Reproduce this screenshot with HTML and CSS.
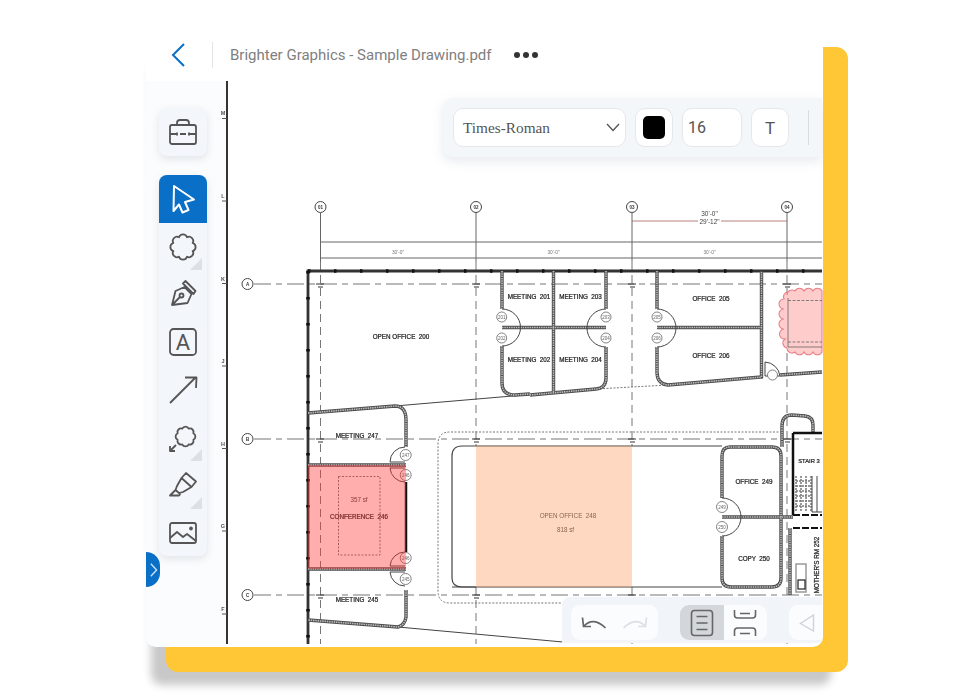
FILE: index.html
```html
<!DOCTYPE html>
<html lang="en">
<head>
<meta charset="utf-8">
<title>Brighter Graphics - Sample Drawing.pdf</title>
<link rel="stylesheet" href="styles.css">
</head>
<body>
<div class="stage">
  <div class="backing"></div>
  <main class="window">
    <header class="header">
      <svg class="back" viewBox="0 0 16 26"><path d="M14 2 3 13l11 11"/></svg>
      <span class="header-sep"></span>
      <span class="title">Brighter Graphics - Sample Drawing.pdf</span>
      <span class="dots"><i></i><i></i><i></i></span>
    </header>
    <section class="canvas">
      <svg class="drawing" viewBox="146 81 677 565">
        <defs>
          <g id="walls">
            <path d="M502 271V309M502 346V383Q502 395 515 395L530 394"/>
            <path d="M553.5 271V392"/>
            <path d="M606 271V309M606 347V378Q606 388 596 389L530 395"/>
            <path d="M502 327.5H606"/>
            <path d="M657 271V309M657 347V372Q657 384 668 385L761.500 377V271"/>
            <path d="M657 327.500H761.500"/>
            <path d="M780 375L822 372"/>
            <path d="M308 413L395 406Q406 406 406 420V447"/>
            <path d="M308 465H406M308 569H406"/>
            <path d="M406 590V617Q405 625 398 627L308 620"/>
            <path d="M739 447H730Q722 447 722 456V498M722 536V578Q722 587 731 587H772Q781 587 781 578V456Q781 447 772 447H739"/>
            <path d="M722 517H793"/>
            <path d="M782 447V426Q782 415 792 415L805 416Q813 417 813 425V433"/>
            <path d="M790 528V595"/>
          </g>
        </defs>

        <rect class="margin" x="146" y="81" width="80" height="565"/>

        <path class="sheet-edge" d="M227 81V644"/>
        <g class="sheet-ticks">
          <path d="M222 118.500H227M222 201H227M222 283.500H227M222 366H227M222 448.500H227M222 531H227M222 614H227"/>
        </g>
        <g class="tick-labels">
          <text x="223" y="115">M</text><text x="223" y="198">L</text><text x="223" y="280.500">K</text>
          <text x="223" y="363">J</text><text x="223" y="445.500">H</text><text x="223" y="528">G</text><text x="223" y="611">F</text>
        </g>

        <path class="grid-solid" d="M320.500 213V262M476 213V262M632 213V262M787 213V262"/>
        <path class="grid-v" d="M320.500 262V644M476 262V446M476 587V644M632 262V446M632 587V644M787 262V644"/>
        <path class="grid-h" d="M254 284H822M254 439H822M254 595H822"/>
        <path class="dim" d="M320 242H822M320 258H822"/>
        <path class="dim-red" d="M632 221H698M721 221H787"/>
        <path class="marks" d="M316 284h8M318 287h5M472 284h8M474 287h5M628 284h8M630 287h5M783 284h8M785 287h5M316 439h8M318 442h5M472 439h8M474 442h5M628 439h8M630 442h5M783 439h8M785 442h5M316 595h8M318 598h5M472 595h8M474 598h5M628 595h8M630 598h5"/>

        <g class="bubble">
          <circle cx="320.500" cy="207" r="5.500"/><circle cx="476" cy="207" r="5.500"/><circle cx="632" cy="207" r="5.500"/><circle cx="787" cy="207" r="5.500"/>
          <circle cx="247.500" cy="284" r="5.500"/><circle cx="247.500" cy="439" r="5.500"/><circle cx="247.500" cy="595" r="5.500"/>
        </g>
        <g class="bubble-text">
          <text x="320.500" y="208.700">01</text><text x="476" y="208.700">02</text><text x="632" y="208.700">03</text><text x="787" y="208.700">04</text>
          <text x="247.500" y="286">A</text><text x="247.500" y="441">B</text><text x="247.500" y="597">C</text>
        </g>
        <g class="dim-text">
          <text x="398" y="254">30'-0"</text><text x="553.500" y="254">30'-0"</text><text x="709.500" y="254">30'-0"</text>
        </g>
        <g class="dim-text-big">
          <text x="709.500" y="215.500">30'-0"</text><text x="709.500" y="223.500">29'-12"</text>
        </g>

        <path class="outer-wall" d="M822 271H308V644"/>
        <path class="outer-dots" d="M308 271H822M308 271V644"/>

        <path class="thin" d="M395 406L530 394.500"/>
        <path class="dashed-thin" d="M596 389L668 385"/>
        <path class="thin" d="M398 627L563 642"/>
        <path class="thin" d="M452 587H722M476 446H722"/>
        <path class="open-office" d="M476 446H462Q452 446 452 456V578Q452 587 462 587H476"/>
        <path class="dotted" d="M782 432H450Q438 432 438 444V591Q438 603 450 603H562"/>

        <use href="#walls" class="wall-outer"/>
        <use href="#walls" class="wall-inner"/>
        <path class="thick" d="M406 482V552"/>

        <path class="thin" d="M502 309A18.500 18.500 0 0 1 502 346M606 309A18.500 18.500 0 0 0 606 347M657 309A18.500 18.500 0 0 1 657 347"/>
        <path class="thin" d="M722 498A19 19 0 0 1 722 536"/>
        <path class="thin" d="M765 362A16 16 0 0 1 780 376H765Z"/>
        <path class="thin" d="M390 462A15 15 0 0 1 405 447M390 468A15 15 0 0 0 405 482M390 566A15 15 0 0 1 405 552M390 572A15 15 0 0 0 405 586M390 462H405M390 468H405M390 566H405M390 572H405"/>

        <g class="tags">
          <circle cx="501.700" cy="317" r="5"/><circle cx="501.700" cy="338" r="5"/><circle cx="606" cy="317" r="5"/><circle cx="606" cy="338" r="5"/>
          <circle cx="657" cy="317" r="5"/><circle cx="657" cy="338" r="5"/><circle cx="772.500" cy="375" r="5"/>
          <circle cx="405.700" cy="455" r="5.500"/><circle cx="405.700" cy="475" r="5.500"/><circle cx="405.700" cy="558" r="5.500"/><circle cx="405.700" cy="579" r="5.500"/>
          <circle cx="722" cy="507" r="5.500"/><circle cx="722" cy="527" r="5.500"/>
        </g>
        <g class="tag-text">
          <text x="501.700" y="318.700">201</text><text x="501.700" y="339.700">202</text><text x="606" y="318.700">203</text><text x="606" y="339.700">204</text>
          <text x="657" y="318.700">205</text><text x="657" y="339.700">206</text>
          <text x="405.700" y="456.700">247</text><text x="405.700" y="476.700">246</text><text x="405.700" y="559.700">246</text><text x="405.700" y="580.700">245</text>
          <text x="722" y="508.700">249</text><text x="722" y="528.700">250</text>
        </g>

        <rect class="inner-dash" x="338.500" y="476.500" width="41.500" height="78.500"/>
        <path class="thick" d="M793 433V515M793 433H822"/>
        <path class="thick-dash" d="M793 528H822M793 515H822"/>
        <path class="stairs" d="M796 476V512M801 476V512M806 476V512M811 476V512M796 481H811M796 486H811M796 491H811M796 496H811M796 501H811M796 506H811"/>
        <path class="thin" d="M812 476V512H822M817 476V512"/>
        <rect class="closet" x="796" y="564" width="10" height="28"/>
        <rect class="closet-dark" x="798" y="580" width="7" height="9"/>

        <g class="labels">
          <text x="401" y="338.500">OPEN OFFICE  200</text>
          <text x="529" y="299">MEETING  201</text><text x="580.500" y="299">MEETING  203</text>
          <text x="529" y="361.500">MEETING  202</text><text x="580.500" y="361.500">MEETING  204</text>
          <text x="711" y="300.500">OFFICE  205</text><text x="711" y="357.500">OFFICE  206</text>
          <text x="357" y="437.500">MEETING  247</text><text x="357" y="602">MEETING  245</text>
          <text x="359" y="519">CONFERENCE  246</text>
          <text class="light" x="359" y="502">357 sf</text>
          <text class="light" x="568" y="517.500">OPEN OFFICE  248</text><text class="light" x="565.500" y="532">818 sf</text>
          <text x="754" y="483.500">OFFICE  249</text><text x="754" y="561">COPY  250</text>
          <text class="small" x="809" y="462.500">STAIR 3</text>
          <text class="rotated" x="-565" y="818.500">MOTHER'S RM 252</text>
        </g>

        <path class="cloud" d="M787 295a5 5 0 0 1 8 -4a5 5 0 0 1 9 0a5 5 0 0 1 9 0a5 5 0 0 1 9 0V352a5 5 0 0 1 -9 0a5 5 0 0 1 -9 0a5 5 0 0 1 -9 0a5 5 0 0 1 -8 -4a5 5 0 0 1 -2 -9a5 5 0 0 1 -1 -10a5 5 0 0 1 0 -10a5 5 0 0 1 0 -10a5 5 0 0 1 0 -10a5 5 0 0 1 3 -7z"/>
        <path class="cloud-dash" d="M788 300.500H822M788 342H822"/>
        <path class="cloud-line" d="M788 347H822M788 298V347"/>
        <rect class="tint-red" x="308" y="465" width="98" height="104"/>
        <rect class="tint-peach" x="476" y="446" width="156" height="141"/>
      </svg>

      <div class="rail">
        <button class="tool tool-single">
          <svg viewBox="0 0 32 32"><rect x="3" y="9" width="26" height="19" rx="2"/><path d="M10 9V7q0-3 3-3h6q3 0 3 3v2M3 18h7M13 18h6M22 18h7M10 16.500v3M22 16.500v3"/></svg>
        </button>
        <div class="tool-stack">
          <button class="tool tool-active">
            <svg viewBox="0 0 32 32"><path d="M7 3l20 13.500-9 2.500 3.500 8-6 2.500-3.500-8-5.500 6.500z"/></svg>
          </button>
          <button class="tool has-more">
            <svg viewBox="0 0 32 32"><path d="M20 6.300A4.200 4.200 0 0 1 25.700 12A4.200 4.200 0 0 1 25.700 20A4.200 4.200 0 0 1 20 25.700A4.200 4.200 0 0 1 12 25.700A4.200 4.200 0 0 1 6.300 20A4.200 4.200 0 0 1 6.300 12A4.200 4.200 0 0 1 12 6.300A4.200 4.200 0 0 1 20 6.300Z"/></svg>
          </button>
          <button class="tool">
            <svg viewBox="0 0 32 32"><path d="M5 27l3.500-14 9-4 7 7-4 9zM5 27l8-8M16 5.500l10.500 10.500M18.500 3l10 10-2 3-10.500-10.500z"/><circle cx="14.500" cy="17.500" r="2"/></svg>
          </button>
          <button class="tool">
            <svg viewBox="0 0 32 32"><rect x="3" y="3" width="26" height="26" rx="3.500"/><text class="icon-letter" x="16" y="23.500">A</text></svg>
          </button>
          <button class="tool">
            <svg viewBox="0 0 32 32"><path d="M3 29L29 3M18 3.500h11.500L29 14"/></svg>
          </button>
          <button class="tool has-more">
            <svg viewBox="0 0 32 32"><path d="M21.750 7.650A3.600 3.600 0 0 1 26.350 12.250A3.600 3.600 0 0 1 26.350 18.750A3.600 3.600 0 0 1 21.750 23.350A3.600 3.600 0 0 1 15.250 23.350A3.600 3.600 0 0 1 10.650 18.750A3.600 3.600 0 0 1 10.650 12.250A3.600 3.600 0 0 1 15.250 7.650A3.600 3.600 0 0 1 21.750 7.650Z"/><path d="M9 24l-6 6M3 25v5h5"/></svg>
          </button>
          <button class="tool has-more">
            <svg viewBox="0 0 32 32"><path d="M19 4l10 8.500-4.500 5.500-10-9zM14.500 9l-4.500 8-1.500 4 3.500 3 4-1 8.500-5M8.500 21l-5.500 5.500h9l1.500-2"/></svg>
          </button>
          <button class="tool">
            <svg viewBox="0 0 32 32"><rect x="3" y="6" width="26" height="20" rx="2"/><path d="M3 21l7-6 6 5 4-3 9 7"/><circle cx="24" cy="11.500" r="1" /></svg>
          </button>
        </div>
      </div>

      <button class="expand">
        <svg viewBox="0 0 10 18"><path d="M2 2l6.500 7-6.500 7"/></svg>
      </button>

      <div class="top-bar">
        <div class="field field-font">
          <span class="font-name">Times-Roman</span>
          <svg class="chevron" viewBox="0 0 14 9"><path d="M1 1l6 6.500L13 1"/></svg>
        </div>
        <div class="field field-swatch"><span class="swatch"></span></div>
        <div class="field field-size">16</div>
        <div class="field field-type">T</div>
        <span class="bar-sep"></span>
      </div>

      <div class="bottom-bar">
        <div class="group group-history">
          <svg class="hist" viewBox="0 0 26 14"><path d="M1.500 1.500L2.500 10.500H10M2.500 10.500Q12 0 24.500 12"/></svg>
          <svg class="hist hist-off" viewBox="0 0 26 14"><path d="M24.500 1.500L23.500 10.500H16M23.500 10.500Q14 0 1.500 12"/></svg>
        </div>
        <div class="group group-view">
          <div class="view view-on">
            <svg viewBox="0 0 24 28"><rect x="1.500" y="1.500" width="21" height="25" rx="3"/><path d="M6.500 7.500h11M6.500 14h11M6.500 20.500h11"/></svg>
          </div>
          <div class="view">
            <svg viewBox="0 0 24 28"><path d="M1.500 1v5q0 3 3 3h15q3 0 3-3V1M1.500 27v-5q0-3 3-3h15q3 0 3 3v5M7 4.500h10M7 24.500h10"/></svg>
          </div>
        </div>
        <div class="group group-page">
          <svg viewBox="0 0 16 18"><path d="M14.500 1L1.500 9.500 14.500 17z"/></svg>
        </div>
      </div>
    </section>
  </main>
</div>
</body>
</html>
```
FILE: styles.css
```css
* { box-sizing: border-box; }
html, body { margin: 0; padding: 0; background: #fff; }
body { font-family: Roboto, "Liberation Sans", sans-serif; }
button { margin: 0; padding: 0; border: 0; background: none; font: inherit; }

.stage { position: relative; width: 973px; height: 695px; overflow: hidden; background: #fff; }

.backing {
  position: absolute; left: 166px; top: 47px; width: 682px; height: 625px;
  background: #ffc636; border-radius: 12px;
  box-shadow: -16px 14px 8px -1px #c8c8c8;
}

.window {
  position: absolute; left: 146px; top: 30px; width: 677px; height: 617px;
  display: flex; flex-direction: column;
  background: #fff; border-radius: 0 0 10px 10px;
}

.header { height: 51px; flex: none; display: flex; align-items: center; padding: 0 0 2px 24px; }
.back { width: 16px; height: 26px; flex: none; }
.back path { fill: none; stroke: #0a6fc6; stroke-width: 2; }
.header-sep { width: 1px; height: 26px; background: #e4e4e4; margin-left: 26px; flex: none; }
.title { margin-left: 17px; font-size: 15px; color: #808080; white-space: nowrap; }
.dots { display: flex; gap: 3px; margin-left: 22px; }
.dots i { width: 6px; height: 6px; border-radius: 50%; background: #333; }

.canvas { position: relative; flex: 1; overflow: hidden; border-radius: 0 0 10px 10px; }

.drawing { display: block; width: 677px; height: 565px; filter: blur(0.35px); }
.drawing text { font-family: "Liberation Sans", sans-serif; text-anchor: middle; white-space: pre; }

.margin { fill: #fbfcfd; }
.sheet-edge { stroke: #333; stroke-width: 2; fill: none; }
.sheet-ticks path { stroke: #555; stroke-width: 1; fill: none; }
.tick-labels text { font-size: 5.500px; fill: #555; font-weight: 700; }

.grid-solid { stroke: #666; stroke-width: 1; fill: none; }
.grid-v { stroke: #777; stroke-width: 1; fill: none; stroke-dasharray: 8 5; }
.grid-h { stroke: #777; stroke-width: 1.100; fill: none; stroke-dasharray: 17 5 6 5; }
.dim { stroke: #666; stroke-width: 1; fill: none; }
.dim-red { stroke: #a56060; stroke-width: 0.800; fill: none; }
.marks { stroke: #333; stroke-width: 1.200; fill: none; }

.bubble circle { fill: #fff; stroke: #444; stroke-width: 1; }
.bubble-text text { font-size: 4.500px; fill: #333; font-weight: 700; }
.dim-text text { font-size: 4.800px; fill: #777; }
.dim-text-big text { font-size: 6.500px; fill: #444; }

.outer-wall { fill: none; stroke: #333; stroke-width: 2.800; }
.outer-dots { fill: none; stroke: #111; stroke-width: 3.600; stroke-dasharray: 2.500 23.500; }
.thin { fill: none; stroke: #444; stroke-width: 1; }
.dashed-thin { fill: none; stroke: #555; stroke-width: 0.800; stroke-dasharray: 2 1.500; }
.open-office { fill: none; stroke: #444; stroke-width: 1.200; }
.dotted { fill: none; stroke: #777; stroke-width: 1; stroke-dasharray: 2 1.500; }

.wall-outer { fill: none; stroke: #4c4c4c; stroke-width: 3.400; }
.wall-inner { fill: none; stroke: #bdbdbd; stroke-width: 1.600; stroke-dasharray: 1.500 0.800; }

.tags circle { fill: #fff; stroke: #666; stroke-width: 0.800; }
.tag-text text { font-size: 4.500px; fill: #666; }

.inner-dash { fill: none; stroke: #555; stroke-width: 0.800; stroke-dasharray: 2 1.500; }
.thick { fill: none; stroke: #111; stroke-width: 2.500; }
.thick-dash { fill: none; stroke: #111; stroke-width: 2; stroke-dasharray: 7 2; }
.stairs { fill: none; stroke: #777; stroke-width: 1.500; stroke-dasharray: 2 1; }
.closet { fill: #fff; stroke: #999; stroke-width: 1.500; }
.closet-dark { fill: #fff; stroke: #222; stroke-width: 1.200; }

.labels text { font-size: 6.300px; fill: #222; stroke: #222; stroke-width: 0.220; }
.labels .light { fill: #444; stroke: none; }
.labels .small { font-size: 5.800px; }
.labels .rotated { transform: rotate(-90deg); }

.cloud { fill: #ffcccc; stroke: #e8808a; stroke-width: 1.100; }
.cloud-dash { fill: none; stroke: #666; stroke-width: 0.800; stroke-dasharray: 3 1.500; }
.cloud-line { fill: none; stroke: #666; stroke-width: 0.800; }
.tint-red { fill: rgba(255, 50, 50, 0.4); }
.tint-peach { fill: rgba(255, 150, 90, 0.37); }

.rail {
  position: absolute; left: 13px; top: 27px; width: 48px;
  display: flex; flex-direction: column; gap: 19.300px;
}
.tool {
  display: flex; align-items: center; justify-content: center;
  position: relative; width: 48px; height: 47.700px; flex: none;
}
.tool svg { width: 32px; height: 32px; display: block; }
.tool svg path, .tool svg rect, .tool svg circle { fill: none; stroke: #555; stroke-width: 1.800; stroke-linejoin: round; }
.icon-letter { font-family: Roboto, "Liberation Sans", sans-serif; font-size: 22px; fill: #555; text-anchor: middle; }
.tool-single, .tool-stack {
  background: #f3f6fa; border-radius: 8px;
  box-shadow: 0 3px 8px rgba(120, 135, 155, 0.2);
}
.tool-stack { display: flex; flex-direction: column; }
.tool-active { background: #0a6fc6; border-radius: 8px 8px 0 0; }
.tool-active svg path { stroke: #fff; stroke-width: 2; }
.has-more::after {
  content: ""; position: absolute; right: 5px; bottom: 0;
  border-style: solid; border-width: 0 0 12px 12px;
  border-color: transparent transparent #dde1e5 transparent;
}

.expand {
  position: absolute; left: 0; top: 471px; width: 14px; height: 35px;
  background: #0a6fc6; border-radius: 0 18px 18px 0;
  display: flex; align-items: center; justify-content: center;
}
.expand svg { width: 9px; height: 16px; }
.expand path { fill: none; stroke: #cfe4f7; stroke-width: 1.500; }

.top-bar {
  position: absolute; left: 297px; top: 17px; width: 379px; height: 59px;
  padding-left: 10px;
  display: flex; align-items: center; gap: 9px;
  background: #f4f7fa; border-radius: 10px 0 0 10px;
  box-shadow: 0 4px 12px rgba(120, 135, 155, 0.18);
}
.field {
  height: 39px; flex: none; display: flex; align-items: center;
  background: #fff; border: 1px solid #e4e7ec; border-radius: 10px;
  color: #555;
}
.field-font { width: 173px; padding: 0 5px 0 9px; justify-content: space-between; }
.font-name { font-family: "Liberation Serif", serif; font-size: 15.300px; color: #555; }
.chevron { width: 14px; height: 9px; }
.chevron path { fill: none; stroke: #555; stroke-width: 1.300; }
.field-swatch { width: 38px; justify-content: center; }
.swatch { width: 22px; height: 23px; background: #000; border-radius: 5px; }
.field-size { width: 60px; padding-left: 5px; font-size: 16px; }
.field-type { width: 38px; justify-content: center; font-size: 17px; }
.bar-sep { width: 1px; height: 35px; background: #d8dce2; margin-left: 10px; flex: none; }

.bottom-bar {
  position: absolute; left: 416px; top: 516px; width: 260px; height: 46px;
  padding: 8px 0 3px 9px;
  display: flex; gap: 22px;
  background: #f1f5f9; border-radius: 8px 0 0 0;
}
.group { background: #fbfcfd; border-radius: 9px; height: 35px; display: flex; align-items: center; overflow: hidden; flex: none; }
.group-history { width: 87px; padding: 0 10px 0 10px; justify-content: space-between; }
.hist { width: 26px; height: 14px; flex: none; }
.hist path { fill: none; stroke: #666; stroke-width: 1.700; }
.hist-off path { stroke: #dcdfe3; }
.group-view { width: 87px; align-items: stretch; }
.view { width: 43.500px; display: flex; align-items: center; justify-content: center; }
.view-on { background: #d3d7dc; }
.view svg { width: 24px; height: 28px; }
.view path, .view rect { fill: none; stroke: #666; stroke-width: 1.600; }
.group-page { width: 33px; border-radius: 9px 0 0 9px; justify-content: center; padding-left: 2px; }
.group-page svg { width: 16px; height: 18px; }
.group-page path { fill: none; stroke: #cfd3d8; stroke-width: 1.400; }
```
